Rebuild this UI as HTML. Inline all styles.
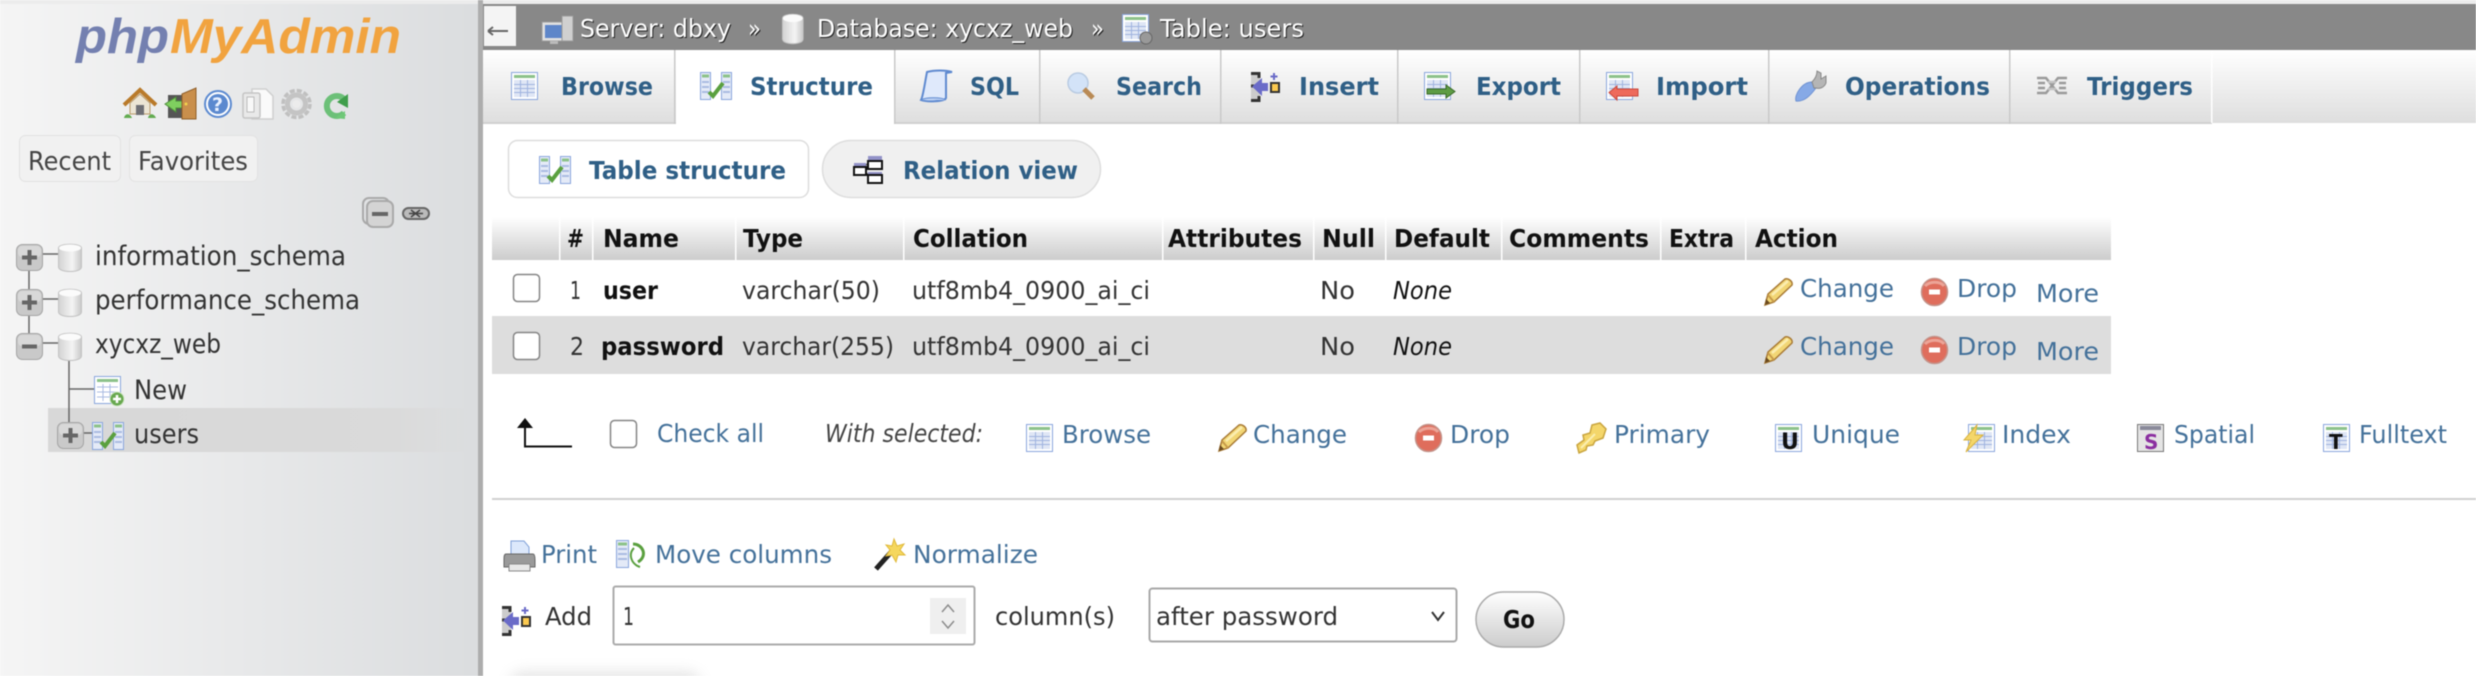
<!DOCTYPE html>
<html><head><meta charset="utf-8"><title>phpMyAdmin</title>
<style>
html,body{margin:0;padding:0;background:#fff;width:2476px;height:676px;overflow:hidden}
svg{display:block}
text{font-family:"DejaVu Sans","Liberation Sans",sans-serif;font-size:26px;fill:#444;white-space:pre;transform:translateX(-1px)}
.tab{font-weight:700;fill:#2f5f86;font-size:25px}
.h{font-weight:700;fill:#111;font-size:25px}
.d{fill:#333;font-size:25px}
.l{fill:#44719a;font-size:25px}
.i{font-style:italic}
.n{fill:#333;font-size:27px}
.cr{fill:#fff;font-size:25px;filter:drop-shadow(1px 1px 0 #222)}
</style></head><body>
<svg xmlns="http://www.w3.org/2000/svg" width="2476" height="676" viewBox="0 0 2476 676" style="filter:blur(.45px)">
<defs>
<linearGradient id="pn" x1="0" x2="1" y1="0" y2="0"><stop offset="0" stop-color="#f5f5f5"/><stop offset="1" stop-color="#dbdddf"/></linearGradient>
<linearGradient id="tb" x1="0" x2="0" y1="0" y2="1"><stop offset="0" stop-color="#fff"/><stop offset="1" stop-color="#dedede"/></linearGradient>
<linearGradient id="th" x1="0" x2="0" y1="0" y2="1"><stop offset="0" stop-color="#fff"/><stop offset="1" stop-color="#ccc"/></linearGradient>
<linearGradient id="hl" x1="0" x2="1" y1="0" y2="0"><stop offset="0" stop-color="#d8d8d8"/><stop offset=".8" stop-color="#dadada"/><stop offset="1" stop-color="#dadada" stop-opacity="0"/></linearGradient>
<linearGradient id="dbg" x1="0" x2="1" y1="0" y2="0"><stop offset="0" stop-color="#d2d2d2"/><stop offset=".6" stop-color="#f4f4f4"/><stop offset="1" stop-color="#c8c8c8"/></linearGradient>
<filter id="bl" x="-30%" y="-100%" width="160%" height="300%"><feGaussianBlur stdDeviation="7"/></filter>

<g id="tbl"><rect x=".5" y=".5" width="26" height="27" fill="#fff" stroke="#8aa6dc"/><rect x="3" y="3" width="21" height="3" fill="#8cc28a"/><rect x="3" y="8" width="21" height="17" fill="#dfe6f5"/><path d="M3 12.500H24M3 16.500H24M3 20.500H24M9.500 8V25M16.500 8V25" stroke="#9fb3df" fill="none"/></g>
<g id="st"><rect x=".5" y=".5" width="10" height="27" fill="#e4eaf7" stroke="#8aa6dc"/><rect x="21.500" y=".5" width="10" height="27" fill="#e4eaf7" stroke="#8aa6dc"/><path d="M2 4H9M23 4H30" stroke="#8cc28a" stroke-width="3"/><path d="M2 10H9M2 15H9M2 20H9M23 10H30M23 15H30M23 20H30" stroke="#a9bbe2" stroke-width="2"/><path d="M9 20L13 24L23 11" fill="none" stroke="#5aa03f" stroke-width="4"/></g>
<g id="pen"><path d="M1 27L4 16L21 1C24 0 29 3 28 7L10 24Z" fill="#f2d675" stroke="#a87a35" stroke-width="1.500"/><path d="M4 17L10 24" stroke="#c79a4a" stroke-width="2"/><path d="M1 27L2 21L6 25Z" fill="#6b4a20"/><path d="M8 17L24 3" stroke="#fbedb0" stroke-width="2.500"/></g>
<g id="dr"><ellipse cx="13.500" cy="14" rx="13" ry="13.500" fill="#df6d5c" stroke="#c4938a" stroke-width="1.500"/><path d="M4 8C9 3 19 3 23 8" fill="none" stroke="#eca497" stroke-width="3"/><rect x="8" y="11.500" width="11" height="5" fill="#fff"/></g>
<g id="ins"><path d="M1 2H10V28H1" fill="#ccc" stroke="none"/><path d="M1 1.500H9V6M1 28.500H9V24M1 14H4" stroke="#333" stroke-width="3" fill="none"/><path d="M2 14.500L12 6V11H18V19H12V24Z" fill="#6a6bc8"/><rect x="21" y="11" width="8" height="9" fill="#fbc94f" stroke="#333" stroke-width="2"/><path d="M24 1V8M20.500 4.500H27.500" stroke="#6a6bc8" stroke-width="2"/></g>
<g id="sm"><rect x=".5" y=".5" width="26" height="26" rx="6" fill="#c9c9c9" stroke="#a4a4a4"/><rect x="2" y="2" width="23" height="11" rx="4" fill="#d8d8d8"/></g>
<g id="pl"><use href="#sm"/><path d="M13.500 6V21M6 13.500H21" stroke="#666" stroke-width="4"/></g>
<g id="mi"><use href="#sm"/><path d="M6 13.500H21" stroke="#666" stroke-width="4"/></g>
<g id="db"><path d="M.5 4C.5 -1 23.500 -1 23.500 4V23C23.500 29 .5 29 .5 23Z" fill="url(#dbg)" stroke="#c2c2c2"/><ellipse cx="12" cy="4" rx="11" ry="3.500" fill="#fbfbfb"/></g>
</defs>

<rect width="2476" height="676" fill="#fff"/>
<rect y="0" width="2476" height="4" fill="#ececec"/>
<rect y="4" width="478" height="672" fill="url(#pn)"/>
<rect x="478" y="0" width="5" height="676" fill="#adadad"/>

<!-- logo -->
<text x="77" y="53" textLength="93" lengthAdjust="spacingAndGlyphs" style="font-family:'Liberation Sans',sans-serif;font-size:49px;font-weight:700;font-style:italic;fill:#7480b0">php</text>
<text x="171" y="53" textLength="231" lengthAdjust="spacingAndGlyphs" style="font-family:'Liberation Sans',sans-serif;font-size:49px;font-weight:700;font-style:italic;fill:#f1a33f">MyAdmin</text>

<!-- nav icons -->
<g transform="translate(124,89)"><path d="M0 16L16 1L32 16" fill="none" stroke="#b97a2a" stroke-width="4"/><path d="M6 14L16 5L26 14V25H6Z" fill="#ece5d5" stroke="#b99a6a"/><rect x="12" y="16" width="8" height="10" fill="#6f6f75"/><path d="M0 29C1 24 6 24 8 29ZM24 29C25 24 30 24 32 29Z" fill="#62ab50"/></g>
<g transform="translate(164,88)"><rect x="4" y="7" width="18" height="23" fill="#555"/><path d="M1 16L12 9V13H18V20H12V24Z" fill="#7fcf5f" stroke="#4c8c3a"/><path d="M18 6L32 0V31H18Z" fill="#c98f4c" stroke="#8f5f2a"/><circle cx="22" cy="16" r="1.500" fill="#f3d14d"/></g>
<g transform="translate(204,91)"><circle cx="14" cy="13" r="13" fill="#fff" stroke="#5c8ad0" stroke-width="2"/><circle cx="14" cy="13" r="10" fill="#5b89cf"/><text x="9" y="20" style="font-size:19px;font-weight:700;fill:#e8f0ff">?</text></g>
<g transform="translate(242,88)"><path d="M10 1H24L31 8V31H10Z" fill="#fafafa" stroke="#cfcfcf" stroke-width="1.500"/><rect x="1" y="5" width="17" height="25" rx="2" fill="#e9e9e9" stroke="#c4c4c4" stroke-width="1.500"/><rect x="5" y="9" width="7" height="15" fill="#f8f8f8" stroke="#bbb"/></g>
<g transform="translate(281,89)"><circle cx="15.500" cy="15" r="9" fill="none" stroke="#c4c4c4" stroke-width="5"/><circle cx="15.500" cy="15" r="13.500" fill="none" stroke="#c0c0c0" stroke-width="3.500" stroke-dasharray="5 2.070"/><circle cx="15.500" cy="15" r="4" fill="#ececec"/></g>
<g transform="translate(323,93)"><path d="M21 6A10 10 0 1 0 21 20" fill="none" stroke="#6cc078" stroke-width="6"/><path d="M14 9L25 1V15Z" fill="#3f9e4b"/><path d="M12 25L22 18V26Z" fill="#6fc878"/></g>

<!-- recent/favorites -->
<rect x="19.500" y="135.500" width="101" height="46" rx="6" fill="#f1f1f1" stroke="#e2e2e2"/>
<rect x="129.500" y="135.500" width="128" height="46" rx="6" fill="#f1f1f1" stroke="#e2e2e2"/>
<text x="29" y="170" textLength="83" lengthAdjust="spacingAndGlyphs">Recent</text>
<text x="139" y="170" textLength="110" lengthAdjust="spacingAndGlyphs">Favorites</text>

<!-- collapse / link -->
<g fill="none" stroke="#a9a9a9" stroke-width="2"><rect x="363" y="198" width="26" height="26" rx="6"/><rect x="367" y="201" width="26" height="26" rx="6" fill="#d4d4d4"/></g>
<path d="M372 214H388" stroke="#666" stroke-width="4"/>
<rect x="403" y="208" width="26" height="11" rx="5.500" fill="#bbb" stroke="#666" stroke-width="2"/>
<path d="M409 213.500H423M411 210L420 217M420 210L411 217" stroke="#444" stroke-width="1.500"/>

<!-- tree -->
<rect x="48" y="408" width="430" height="44" fill="url(#hl)"/>
<g stroke="#666" stroke-width="1.500" fill="none">
<path d="M29 271V289M29 315V333M43 254H58M43 299H58M43 343H58M69 359V422M69 389H94M83 433H92"/>
</g>
<use href="#pl" x="16" y="244"/><use href="#pl" x="16" y="289"/><use href="#mi" x="16" y="333"/>
<use href="#db" x="58" y="244"/><use href="#db" x="58" y="289"/><use href="#db" x="58" y="333"/>
<text class="n" x="96" y="265" textLength="251" lengthAdjust="spacingAndGlyphs">information_schema</text>
<text class="n" x="96" y="309" textLength="265" lengthAdjust="spacingAndGlyphs">performance_schema</text>
<text class="n" x="96" y="353" textLength="126" lengthAdjust="spacingAndGlyphs">xycxz_web</text>
<g transform="translate(94,376)"><rect x=".5" y=".5" width="26" height="27" fill="#fff" stroke="#8aa6dc"/><rect x="3" y="3" width="21" height="3" fill="#8cc28a"/><path d="M3 11H24M3 16H24M3 21H24M9 8V25M16 8V25" stroke="#a9bbe2"/><circle cx="23" cy="23" r="7" fill="#68a84f" stroke="#cfe5c5"/><path d="M23 19V27M19 23H27" stroke="#fff" stroke-width="2.500"/></g>
<text class="n" x="135" y="399" textLength="53" lengthAdjust="spacingAndGlyphs">New</text>
<use href="#pl" x="57" y="422"/>
<use href="#st" x="92" y="422"/>
<text class="n" x="135" y="443" textLength="65" lengthAdjust="spacingAndGlyphs">users</text>

<!-- top bar -->
<rect x="483" y="4" width="1993" height="46" fill="#888"/>
<rect x="484" y="6" width="32" height="40" fill="#f4f4f4"/>
<path d="M488 31H508M488 31L493 27M488 31L493 35" stroke="#666" stroke-width="2" fill="none"/>
<g transform="translate(542,14)"><rect x="0" y="8" width="23" height="19" fill="#e0e0e0" stroke="#999"/><rect x="3" y="11" width="17" height="13" fill="#5e86c9"/><rect x="20" y="2" width="11" height="25" fill="#d0d0d0" stroke="#999"/><rect x="8" y="27" width="8" height="3" fill="#bbb"/></g>
<use href="#db" transform="translate(782,14) scale(.9,1.080)"/>
<g transform="translate(1122,14)"><use href="#tbl"/><circle cx="24" cy="24" r="6" fill="#999" stroke="#666"/></g>
<g>
<text class="cr" x="581" y="37" textLength="151" lengthAdjust="spacingAndGlyphs">Server: dbxy</text>
<text class="cr" x="749" y="37" textLength="13" lengthAdjust="spacingAndGlyphs">»</text>
<text class="cr" x="818" y="37" textLength="256" lengthAdjust="spacingAndGlyphs">Database: xycxz_web</text>
<text class="cr" x="1092" y="37" textLength="13" lengthAdjust="spacingAndGlyphs">»</text>
<text class="cr" x="1161" y="37" textLength="144" lengthAdjust="spacingAndGlyphs">Table: users</text>
</g>

<!-- tabs -->
<rect x="483" y="50" width="1993" height="73" fill="url(#tb)"/>
<rect x="483" y="122" width="1729" height="2" fill="#d0d0d0"/>
<rect x="676" y="50" width="218" height="75" fill="#fff"/>
<g fill="#c9c9c9">
<rect x="674" y="50" width="1.500" height="74"/><rect x="894" y="50" width="1.500" height="74"/><rect x="1039" y="50" width="1.500" height="74"/><rect x="1220" y="50" width="1.500" height="74"/><rect x="1397" y="50" width="1.500" height="74"/><rect x="1579" y="50" width="1.500" height="74"/><rect x="1768" y="50" width="1.500" height="74"/><rect x="2009" y="50" width="1.500" height="74"/>
</g>
<rect x="2211" y="50" width="1.500" height="73" fill="#fff"/>
<use href="#tbl" x="511" y="72"/>
<use href="#st" x="700" y="72"/>
<g transform="translate(920,70)"><path d="M7 2C14 0 26 0 32 2L26 3V28C24 32 6 32 1 30C3 27 5 12 7 2Z" fill="#dfe9fb" stroke="#5f8ad0" stroke-width="2"/><path d="M1 30C5 27 22 27 26 30" fill="#bcd0f2" stroke="#5f8ad0"/></g>
<g transform="translate(1067,72)"><circle cx="11" cy="11" r="10" fill="#d3e3f8" stroke="#b9cbe2" stroke-width="1.500"/><path d="M17 17L26 26" stroke="#b98a55" stroke-width="5"/></g>
<use href="#ins" x="1250" y="72"/>
<g transform="translate(1424,72)"><use href="#tbl"/><path d="M3 17H22V13L31 19.500L22 26V22H3Z" fill="#5e9c45" stroke="#396a28"/></g>
<g transform="translate(1606,72)"><use href="#tbl"/><path d="M11 17H32V24H11V28L3 20.500L11 14Z" fill="#ee6a5c" stroke="#c9483c"/></g>
<g transform="translate(1794,70)"><path d="M2 31C0 25 8 12 18 12L22 18C16 26 10 32 2 31Z" fill="#86a9e6" stroke="#6f92d2"/><path d="M20 18L18 12C21 9 23 5 23 1L27 3V9L32 6V13C30 18 25 19 22 18Z" fill="#b5b5b5" stroke="#888"/></g>
<g transform="translate(2036,75)" fill="none" stroke="#9a9a9a" stroke-width="2.500"><path d="M1 3H10L22 18H31M1 18H10L22 3H31M2 8H9M2 13H9M23 8H30M23 13H30"/><path d="M12 7H20M12 14H20" stroke="#c4c4c4"/></g>

<text class="tab" x="562" y="95" textLength="92" lengthAdjust="spacingAndGlyphs">Browse</text>
<text class="tab" x="751" y="95" textLength="123" lengthAdjust="spacingAndGlyphs">Structure</text>
<text class="tab" x="971" y="95" textLength="49" lengthAdjust="spacingAndGlyphs">SQL</text>
<text class="tab" x="1117" y="95" textLength="86" lengthAdjust="spacingAndGlyphs">Search</text>
<text class="tab" x="1300" y="95" textLength="80" lengthAdjust="spacingAndGlyphs">Insert</text>
<text class="tab" x="1477" y="95" textLength="85" lengthAdjust="spacingAndGlyphs">Export</text>
<text class="tab" x="1657" y="95" textLength="92" lengthAdjust="spacingAndGlyphs">Import</text>
<text class="tab" x="1846" y="95" textLength="145" lengthAdjust="spacingAndGlyphs">Operations</text>
<text class="tab" x="2088" y="95" textLength="106" lengthAdjust="spacingAndGlyphs">Triggers</text>

<!-- sub tabs -->
<rect x="508.500" y="140.500" width="300" height="57" rx="9" fill="#fff" stroke="#ddd" stroke-width="1.500"/>
<rect x="822.500" y="140.500" width="278" height="57" rx="28.500" fill="#f0f0f0" stroke="#ddd" stroke-width="1.500"/>
<use href="#st" x="539" y="156"/>
<g transform="translate(854,156)"><path d="M9 13L17 3M9 13L17 22" stroke="#333" fill="none"/><rect x="14" y="0" width="14" height="5" fill="#9292c8"/><rect x="14" y="5" width="14" height="8" fill="#fff" stroke="#111" stroke-width="2"/><rect x="14" y="16" width="14" height="3" fill="#9292c8"/><rect x="14" y="19" width="14" height="8" fill="#fff" stroke="#111" stroke-width="2"/><rect x="0" y="7" width="12" height="4" fill="#9292c8"/><rect x="0" y="11" width="12" height="8" fill="#fff" stroke="#111" stroke-width="2"/></g>
<text class="tab" x="590" y="179" textLength="197" lengthAdjust="spacingAndGlyphs">Table structure</text>
<text class="tab" x="904" y="179" textLength="175" lengthAdjust="spacingAndGlyphs">Relation view</text>

<!-- table -->
<rect x="492" y="217" width="1619" height="43" fill="url(#th)"/>
<rect x="492" y="316" width="1619" height="58" fill="#ddd"/>
<g fill="#fff"><rect x="559" y="217" width="1.500" height="43"/><rect x="592" y="217" width="1.500" height="43"/><rect x="735" y="217" width="1.500" height="43"/><rect x="903" y="217" width="1.500" height="43"/><rect x="1162" y="217" width="1.500" height="43"/><rect x="1313" y="217" width="1.500" height="43"/><rect x="1385" y="217" width="1.500" height="43"/><rect x="1501" y="217" width="1.500" height="43"/><rect x="1660" y="217" width="1.500" height="43"/><rect x="1745" y="217" width="1.500" height="43"/></g>
<text class="h" x="568" y="247" textLength="17" lengthAdjust="spacingAndGlyphs">#</text>
<text class="h" x="604" y="247" textLength="76" lengthAdjust="spacingAndGlyphs">Name</text>
<text class="h" x="744" y="247" textLength="60" lengthAdjust="spacingAndGlyphs">Type</text>
<text class="h" x="914" y="247" textLength="115" lengthAdjust="spacingAndGlyphs">Collation</text>
<text class="h" x="1169" y="247" textLength="134" lengthAdjust="spacingAndGlyphs">Attributes</text>
<text class="h" x="1323" y="247" textLength="53" lengthAdjust="spacingAndGlyphs">Null</text>
<text class="h" x="1395" y="247" textLength="96" lengthAdjust="spacingAndGlyphs">Default</text>
<text class="h" x="1510" y="247" textLength="140" lengthAdjust="spacingAndGlyphs">Comments</text>
<text class="h" x="1670" y="247" textLength="65" lengthAdjust="spacingAndGlyphs">Extra</text>
<text class="h" x="1756" y="247" textLength="83" lengthAdjust="spacingAndGlyphs">Action</text>

<rect x="513.500" y="274.500" width="26" height="27" rx="4" fill="#fff" stroke="#858585" stroke-width="1.500"/>
<rect x="513.500" y="332.500" width="26" height="27" rx="4" fill="#fff" stroke="#858585" stroke-width="1.500"/>
<text class="d" x="571" y="299" textLength="11" lengthAdjust="spacingAndGlyphs">1</text>
<text class="d" x="604" y="299" textLength="55" lengthAdjust="spacingAndGlyphs" style="font-weight:700;fill:#111">user</text>
<text class="d" x="743" y="299" textLength="138" lengthAdjust="spacingAndGlyphs">varchar(50)</text>
<text class="d" x="913" y="299" textLength="238" lengthAdjust="spacingAndGlyphs">utf8mb4_0900_ai_ci</text>
<text class="d" x="1321" y="299" textLength="35" lengthAdjust="spacingAndGlyphs">No</text>
<text class="d i" x="1394" y="299" textLength="59" lengthAdjust="spacingAndGlyphs" style="fill:#111">None</text>
<use href="#pen" x="1764" y="278"/>
<text class="l" x="1801" y="297" textLength="94" lengthAdjust="spacingAndGlyphs">Change</text>
<use href="#dr" x="1921" y="278"/>
<text class="l" x="1958" y="297" textLength="60" lengthAdjust="spacingAndGlyphs">Drop</text>
<text class="l" x="2037" y="302" textLength="63" lengthAdjust="spacingAndGlyphs">More</text>

<text class="d" x="571" y="355" textLength="14" lengthAdjust="spacingAndGlyphs">2</text>
<text class="d" x="602" y="355" textLength="123" lengthAdjust="spacingAndGlyphs" style="font-weight:700;fill:#111">password</text>
<text class="d" x="743" y="355" textLength="152" lengthAdjust="spacingAndGlyphs">varchar(255)</text>
<text class="d" x="913" y="355" textLength="238" lengthAdjust="spacingAndGlyphs">utf8mb4_0900_ai_ci</text>
<text class="d" x="1321" y="355" textLength="35" lengthAdjust="spacingAndGlyphs">No</text>
<text class="d i" x="1394" y="355" textLength="59" lengthAdjust="spacingAndGlyphs" style="fill:#111">None</text>
<use href="#pen" x="1764" y="336"/>
<text class="l" x="1801" y="355" textLength="94" lengthAdjust="spacingAndGlyphs">Change</text>
<use href="#dr" x="1921" y="336"/>
<text class="l" x="1958" y="355" textLength="60" lengthAdjust="spacingAndGlyphs">Drop</text>
<text class="l" x="2037" y="360" textLength="63" lengthAdjust="spacingAndGlyphs">More</text>

<!-- bulk -->
<path d="M525 424V446.500H572" fill="none" stroke="#111" stroke-width="2"/>
<path d="M517 428L525 418L533 428Z" fill="#111"/>
<rect x="610.500" y="420.500" width="26" height="27" rx="4" fill="#fff" stroke="#858585" stroke-width="1.500"/>
<text class="l" x="658" y="442" textLength="107" lengthAdjust="spacingAndGlyphs">Check all</text>
<text class="d i" x="826" y="442" textLength="158" lengthAdjust="spacingAndGlyphs" style="fill:#444">With selected:</text>
<use href="#tbl" x="1026" y="424"/>
<text class="l" x="1063" y="443" textLength="89" lengthAdjust="spacingAndGlyphs">Browse</text>
<use href="#pen" x="1218" y="424"/>
<text class="l" x="1254" y="443" textLength="94" lengthAdjust="spacingAndGlyphs">Change</text>
<use href="#dr" x="1415" y="424"/>
<text class="l" x="1451" y="443" textLength="60" lengthAdjust="spacingAndGlyphs">Drop</text>
<g transform="translate(1575,422)"><path d="M4 31L2 23L9 18L8 13L15 11L17 3L25 1L31 7L28 16L20 19L18 23L12 24L11 28Z" fill="#f4d66a" stroke="#c9a53f" stroke-width="1.500"/><path d="M6 26L20 12" stroke="#fbeeb0" stroke-width="2"/></g>
<text class="l" x="1615" y="443" textLength="96" lengthAdjust="spacingAndGlyphs">Primary</text>
<g transform="translate(1775,424)"><use href="#tbl"/><text x="7" y="25" style="font-size:22px;font-weight:700;fill:#111">U</text></g>
<text class="l" x="1813" y="443" textLength="88" lengthAdjust="spacingAndGlyphs">Unique</text>
<g transform="translate(1968,424)"><use href="#tbl"/><path d="M9 1L-4 16H3L-2 28L15 11H7Z" fill="#f4d66a" stroke="#d9b33f"/></g>
<text class="l" x="2003" y="443" textLength="69" lengthAdjust="spacingAndGlyphs">Index</text>
<g transform="translate(2137,424)"><rect x=".5" y=".5" width="26" height="27" fill="#e4e4e4" stroke="#777"/><rect x="3" y="2" width="21" height="4" fill="#8a8a9a"/><text x="8" y="25" style="font-size:20px;font-weight:700;fill:#8b2fa0">S</text></g>
<text class="l" x="2175" y="443" textLength="81" lengthAdjust="spacingAndGlyphs">Spatial</text>
<g transform="translate(2323,424)"><use href="#tbl"/><text x="7" y="25" style="font-size:20px;font-weight:700;fill:#111">T</text></g>
<text class="l" x="2360" y="443" textLength="88" lengthAdjust="spacingAndGlyphs">Fulltext</text>

<rect x="492" y="498" width="1984" height="2" fill="#d0d0d0"/>

<!-- print row -->
<g transform="translate(503,540)"><path d="M8 1H21L26 7V16H8Z" fill="#dce8fb" stroke="#7fa0d8"/><path d="M3 14H30C32 14 32 18 32 20V27H1V20C1 17 1 14 3 14Z" fill="#9a9a9a" stroke="#666"/><rect x="6" y="24" width="21" height="7" fill="#e8e8e8" stroke="#888"/></g>
<text class="l" x="542" y="563" textLength="56" lengthAdjust="spacingAndGlyphs">Print</text>
<g transform="translate(616,540)"><rect x=".5" y=".5" width="12" height="27" fill="#e4eaf7" stroke="#8aa6dc"/><path d="M2 4H11" stroke="#8cc28a" stroke-width="3"/><path d="M2 9H11M2 14H11M2 19H11" stroke="#a9bbe2" stroke-width="2"/><path d="M17 4C27 4 32 16 22 22" fill="none" stroke="#5aa03f" stroke-width="3"/><path d="M24 27C15 24 12 14 18 8" fill="none" stroke="#5aa03f" stroke-width="2"/></g>
<text class="l" x="656" y="563" textLength="177" lengthAdjust="spacingAndGlyphs">Move columns</text>
<g transform="translate(874,539)"><path d="M2 30L18 12" stroke="#222" stroke-width="5"/><path d="M20 0L23 7L30 5L26 11L31 16L24 16L22 23L18 16L12 17L16 11L12 6L18 7Z" fill="#f5d75e" stroke="#e0b93a"/></g>
<text class="l" x="914" y="563" textLength="125" lengthAdjust="spacingAndGlyphs">Normalize</text>

<!-- add row -->
<use href="#ins" x="501" y="606"/>
<text class="d" x="546" y="625" textLength="47" lengthAdjust="spacingAndGlyphs">Add</text>
<rect x="613.500" y="586.500" width="361" height="58" rx="2" fill="#fff" stroke="#ababab" stroke-width="2"/>
<text class="d" x="624" y="625" textLength="11" lengthAdjust="spacingAndGlyphs">1</text>
<rect x="930" y="598" width="36" height="36" fill="#efefef"/>
<path d="M942 612L948 605L954 612M942 621L948 628L954 621" fill="none" stroke="#8c8c8c" stroke-width="1.500"/>
<text class="d" x="996" y="625" textLength="120" lengthAdjust="spacingAndGlyphs">column(s)</text>
<rect x="1149.500" y="588.500" width="307" height="53" rx="3" fill="#fff" stroke="#a8a8a8" stroke-width="2"/>
<text class="d" x="1157" y="625" textLength="182" lengthAdjust="spacingAndGlyphs">after password</text>
<path d="M1432 612L1438 620L1444 612" fill="none" stroke="#333" stroke-width="2"/>
<rect x="1476" y="592" width="88" height="55" rx="27.500" fill="url(#th)" stroke="#aaa" stroke-width="1.500"/>
<text class="h" x="1504" y="628" textLength="32" lengthAdjust="spacingAndGlyphs">Go</text>

<rect x="510" y="672" width="190" height="24" rx="12" fill="#bbb" filter="url(#bl)" opacity=".4"/>
</svg>
</body></html>
